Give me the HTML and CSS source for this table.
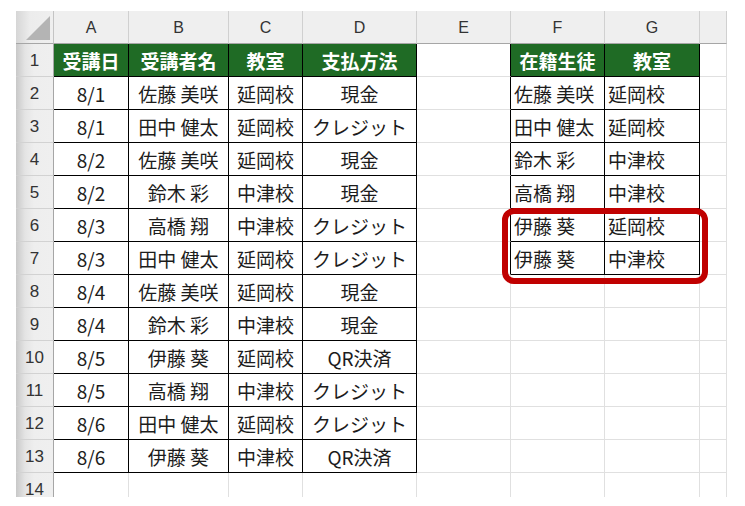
FILE: index.html
```html
<!DOCTYPE html>
<html lang="ja">
<head>
<meta charset="utf-8">
<title>Sheet</title>
<link rel="stylesheet" href="styles.css">
</head>
<body>
<div class="sheet">
  <div class="corner"></div><div class="ch">A</div><div class="ch">B</div><div class="ch">C</div><div class="ch">D</div><div class="ch">E</div><div class="ch">F</div><div class="ch">G</div><div class="ch"></div>

  <div class="rh">1</div><div class="c h">受講日</div><div class="c h">受講者名</div><div class="c h">教室</div><div class="c h">支払方法</div><div class="c br"></div><div class="c h">在籍生徒</div><div class="c h">教室</div><div class="c"></div>

  <div class="rh">2</div><div class="c t">8/1</div><div class="c t">佐藤 美咲</div><div class="c t">延岡校</div><div class="c t">現金</div><div class="c br"></div><div class="c t l">佐藤 美咲</div><div class="c t l">延岡校</div><div class="c"></div>

  <div class="rh">3</div><div class="c t">8/1</div><div class="c t">田中 健太</div><div class="c t">延岡校</div><div class="c t">クレジット</div><div class="c br"></div><div class="c t l">田中 健太</div><div class="c t l">延岡校</div><div class="c"></div>

  <div class="rh">4</div><div class="c t">8/2</div><div class="c t">佐藤 美咲</div><div class="c t">延岡校</div><div class="c t">現金</div><div class="c br"></div><div class="c t l">鈴木 彩</div><div class="c t l">中津校</div><div class="c"></div>

  <div class="rh">5</div><div class="c t">8/2</div><div class="c t">鈴木 彩</div><div class="c t">中津校</div><div class="c t">現金</div><div class="c br"></div><div class="c t l">高橋 翔</div><div class="c t l">中津校</div><div class="c"></div>

  <div class="rh">6</div><div class="c t">8/3</div><div class="c t">高橋 翔</div><div class="c t">中津校</div><div class="c t">クレジット</div><div class="c br"></div><div class="c t l">伊藤 葵</div><div class="c t l">延岡校</div><div class="c"></div>

  <div class="rh">7</div><div class="c t">8/3</div><div class="c t">田中 健太</div><div class="c t">延岡校</div><div class="c t">クレジット</div><div class="c br"></div><div class="c t l">伊藤 葵</div><div class="c t l">中津校</div><div class="c"></div>

  <div class="rh">8</div><div class="c t">8/4</div><div class="c t">佐藤 美咲</div><div class="c t">延岡校</div><div class="c t">現金</div><div class="c"></div><div class="c"></div><div class="c"></div><div class="c"></div>

  <div class="rh">9</div><div class="c t">8/4</div><div class="c t">鈴木 彩</div><div class="c t">中津校</div><div class="c t">現金</div><div class="c"></div><div class="c"></div><div class="c"></div><div class="c"></div>

  <div class="rh">10</div><div class="c t">8/5</div><div class="c t">伊藤 葵</div><div class="c t">延岡校</div><div class="c t">QR決済</div><div class="c"></div><div class="c"></div><div class="c"></div><div class="c"></div>

  <div class="rh">11</div><div class="c t">8/5</div><div class="c t">高橋 翔</div><div class="c t">中津校</div><div class="c t">クレジット</div><div class="c"></div><div class="c"></div><div class="c"></div><div class="c"></div>

  <div class="rh">12</div><div class="c t">8/6</div><div class="c t">田中 健太</div><div class="c t">延岡校</div><div class="c t">クレジット</div><div class="c"></div><div class="c"></div><div class="c"></div><div class="c"></div>

  <div class="rh">13</div><div class="c t">8/6</div><div class="c t">伊藤 葵</div><div class="c t">中津校</div><div class="c t">QR決済</div><div class="c"></div><div class="c"></div><div class="c"></div><div class="c"></div>

  <div class="rh">14</div><div class="c"></div><div class="c"></div><div class="c"></div><div class="c"></div><div class="c"></div><div class="c"></div><div class="c"></div><div class="c"></div>

  <div class="highlight"></div>
</div>
</body>
</html>
```

FILE: styles.css
```css
* { box-sizing: border-box; }
html, body { margin: 0; padding: 0; background: #ffffff; }

.sheet {
  position: relative;
  margin: 11px 0 0 16px;
  width: 711px;
  height: 486px;
  overflow: hidden;
  display: grid;
  grid-template-columns: 38px 75px 100px 74px 114px 94px 94px 95px 27px;
  grid-auto-rows: 33px;
  font-family: "Noto Sans CJK JP", "Noto Sans", sans-serif;
  color: #1c1c1c;
}

.corner {
  position: relative;
  background: linear-gradient(to right, #d6d6d6 0, #ececec 14px, #efefef 100%);
  border-right: 1px solid #c4c4c4;
  border-bottom: 1px solid #a6a6a6;
}
.corner::after {
  content: "";
  position: absolute;
  right: 3px;
  bottom: 3px;
  width: 24px;
  height: 24px;
  background: #b4b4b4;
  clip-path: polygon(100% 0, 100% 100%, 0 100%);
}

.ch {
  display: flex;
  align-items: center;
  justify-content: center;
  background: #efefef;
  border-right: 1px solid #d0d0d0;
  border-bottom: 1px solid #a6a6a6;
  font-family: "Liberation Sans", Arial, sans-serif;
  font-size: 16px;
  color: #333333;
  padding-top: 1px;
}

.rh {
  display: flex;
  align-items: center;
  justify-content: center;
  background: linear-gradient(to right, #c8c8c8 0, #e4e4e4 9px, #eeeeee 18px, #efefef 100%);
  border-right: 1px solid #a6a6a6;
  border-bottom: 1px solid #d2d2d2;
  font-family: "Liberation Sans", Arial, sans-serif;
  font-size: 17px;
  color: #333333;
  padding-top: 2px;
}

.c {
  display: flex;
  align-items: center;
  justify-content: center;
  border-right: 1px solid #e0e0e0;
  border-bottom: 1px solid #e0e0e0;
  font-size: 19px;
  white-space: nowrap;
  overflow: hidden;
  padding-top: 1px;
}

.c.l {
  justify-content: flex-start;
  padding-left: 3px;
}

.c.t {
  border-right-color: #000000;
  border-bottom-color: #000000;
}

.c.br {
  border-right-color: #000000;
}

.c.h {
  background: #1f6b25;
  color: #ffffff;
  font-weight: bold;
  border-right-color: #000000;
  border-bottom-color: #000000;
}

.highlight {
  position: absolute;
  left: 486px;
  top: 197px;
  width: 206px;
  height: 76px;
  border: 6px solid #c00000;
  border-radius: 12px;
}
```
